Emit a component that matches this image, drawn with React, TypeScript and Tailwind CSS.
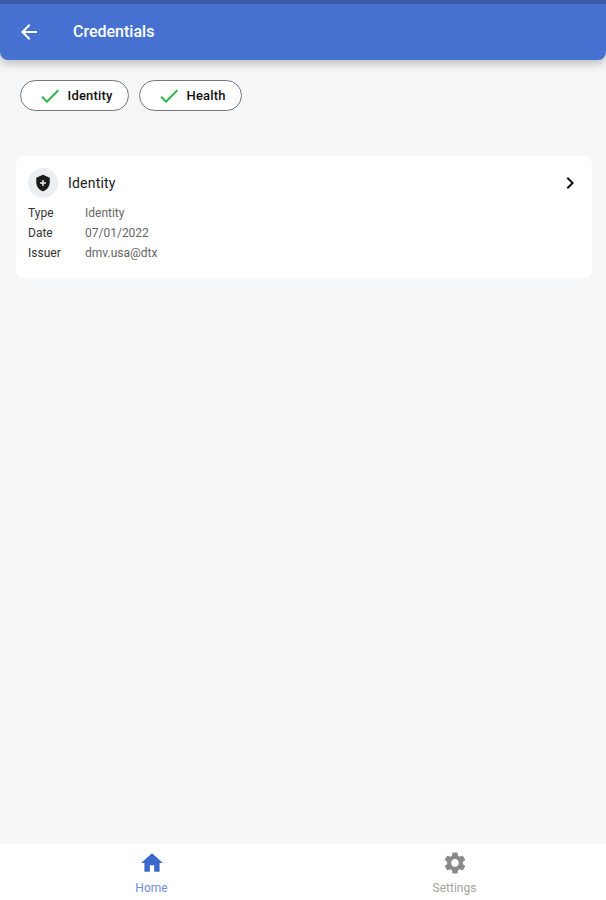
import React from 'react';
import { MdArrowBack, MdCheck, MdChevronRight, MdHome, MdSettings } from 'react-icons/md';

const rows = [
  { label: 'Type', value: 'Identity' },
  { label: 'Date', value: '07/01/2022' },
  { label: 'Issuer', value: 'dmv.usa@dtx' },
];

const filters = [
  { name: 'Identity', width: 'w-[109px]' },
  { name: 'Health', width: 'w-[103px]' },
];

const App: React.FC = () => {
  return (
    <div className="h-[900px] w-[606px] flex flex-col bg-[#f4f6f8] font-['Roboto',sans-serif] overflow-hidden">
      <div className="h-1 bg-[#3c5aa6]" />
      <header className="h-14 flex items-center pl-[17px] bg-[#4771d0] rounded-b-lg shadow-[0_4px_8px_rgba(0,0,0,0.22)]">
        <MdArrowBack className="text-white" size={24} />
        <h1 className="ml-[32px] text-base font-medium text-white">Credentials</h1>
      </header>

      <main className="flex-1">
        <div className="flex gap-[10px] pl-5 pt-5">
          {filters.map((f) => (
            <div
              key={f.name}
              className={`${f.width} h-[31px] flex items-center pl-[17px] bg-white border border-[#777] rounded-2xl`}
            >
              <MdCheck className="text-[#2db548]" size={24} />
              <span className="ml-[5.5px] text-[13px] font-medium tracking-[0.2px] text-[#111]">{f.name}</span>
            </div>
          ))}
        </div>

        <section className="ml-4 mr-[14px] mt-[45px] h-[122px] px-3 pt-[12px] bg-white rounded-lg">
          <div className="flex items-center">
            <div className="w-[30px] h-[30px] flex items-center justify-center rounded-full bg-[#eceef0]">
              <svg width="18" height="18" viewBox="0 0 24 24" fill="#1c1c1e">
                <path d="M12 1 3 5v6c0 5.55 3.84 10.74 9 12 5.16-1.26 9-6.45 9-12V5l-9-4zm4 12h-3v3h-2v-3H8v-2h3V8h2v3h3v2z" />
              </svg>
            </div>
            <span className="ml-[10px] text-sm tracking-[0.2px] text-[#222]">Identity</span>
            <MdChevronRight className="ml-auto mr-[-2px] text-[#111]" size={24} />
          </div>
          <div className="mt-[5px]">
            {rows.map((r) => (
              <div key={r.label} className="h-5 flex items-center text-xs">
                <span className="w-[57px] text-[#333]">{r.label}</span>
                <span className="text-[#666]">{r.value}</span>
              </div>
            ))}
          </div>
        </section>
      </main>

      <nav className="h-14 grid grid-cols-2 bg-white">
        <div className="flex flex-col items-center pt-[6px]">
          <MdHome className="text-[#3c68cc]" size={26} />
          <span className="mt-1 text-xs text-[#6f8fd8]">Home</span>
        </div>
        <div className="flex flex-col items-center pt-[6px]">
          <MdSettings className="text-[#8a8a8a]" size={26} />
          <span className="mt-1 text-xs text-[#a3a3a3]">Settings</span>
        </div>
      </nav>
    </div>
  );
};

export default App;
